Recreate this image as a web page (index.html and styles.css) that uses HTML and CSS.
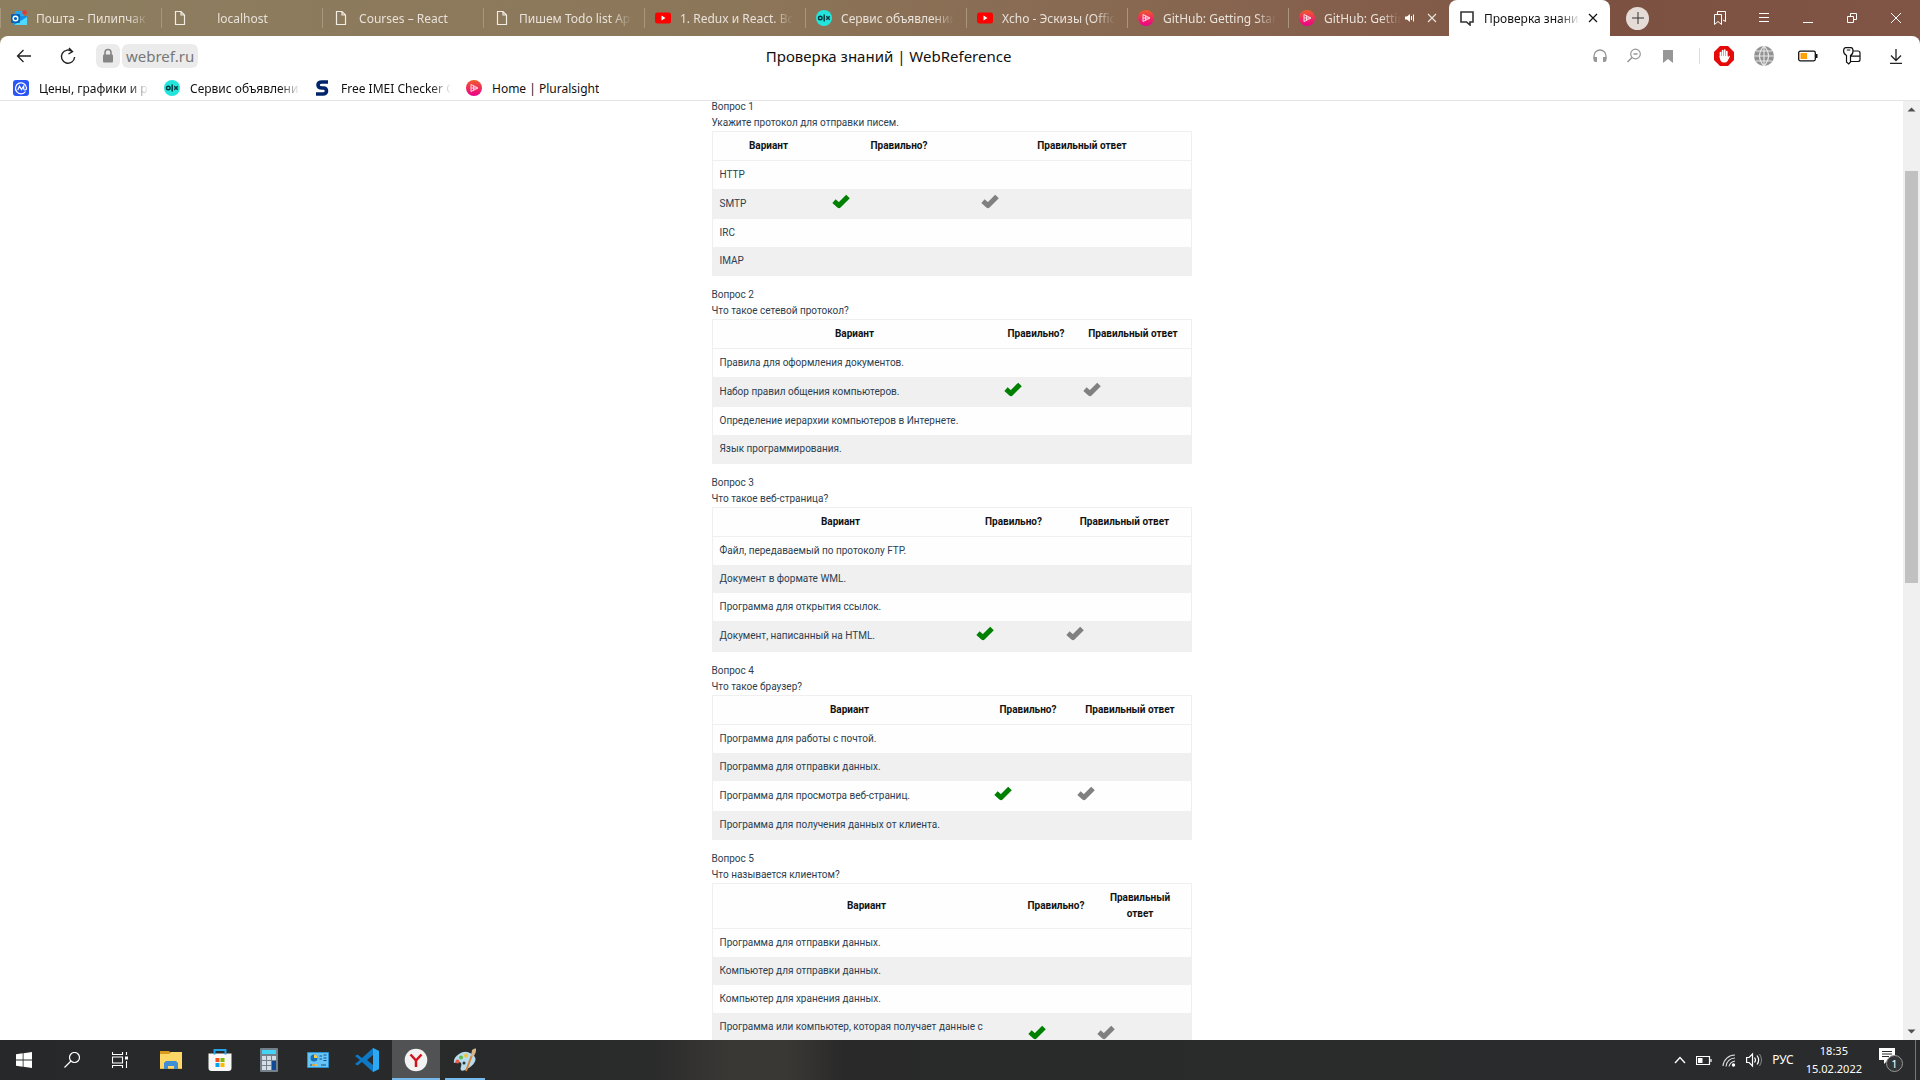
FILE: index.html
```html
<!DOCTYPE html>
<html lang="ru">
<head>
<meta charset="utf-8">
<title>Проверка знаний | WebReference</title>
<link rel="stylesheet" href="styles.css">
</head>
<body>
<svg class="defs" aria-hidden="true">
  <symbol id="check" viewBox="0 0 18 20"><path d="M2 7.200 7 11.600 16 2.400" fill="none" stroke="currentColor" stroke-width="5" stroke-linejoin="round"/></symbol>
  <symbol id="doc" viewBox="0 0 16 16"><path d="M3.500 1.500h5.500L12.500 5v9.500h-9zM9 1.500V5h3.500" fill="none" stroke="#f1ece4" stroke-width="1.2"/></symbol>
  <symbol id="youtube" viewBox="0 0 16 16"><rect y="2.500" width="16" height="11" rx="2.500" fill="#f00"/><path d="M6.500 5.500v5L10.500 8z" fill="#fff"/></symbol>
  <symbol id="olx" viewBox="0 0 16 16"><circle cx="8" cy="8" r="8" fill="#23e5db"/><g fill="none" stroke="#04353c" stroke-width="1.400"><circle cx="4.300" cy="8" r="1.800"/><path d="M8.200 4.500v7M10.300 6.300l3.400 3.400"/><path d="M13.700 6.300l-3.400 3.400"/></g></symbol>
  <symbol id="plural" viewBox="0 0 16 16"><circle cx="8" cy="8" r="8" fill="url(#pink)"/><path d="M5 4.500v7l7-3.500zM7.500 5.500v5M5 8h6" fill="none" stroke="#ffd9e4" stroke-width="1"/></symbol>
  <symbol id="cross" viewBox="0 0 10 10"><path d="m1 1 8 8M9 1 1 9" fill="none" stroke="currentColor" stroke-width="1.200"/></symbol>
  <linearGradient id="pink" x1="0" y1="0" x2="0" y2="1"><stop offset="0" stop-color="#f15b2a"/><stop offset="1" stop-color="#ec008c"/></linearGradient>
</svg>

<header class="browser">
  <div class="tabstrip">
    <nav class="tabs" aria-label="Вкладки">
      <a class="tab" href="#"><svg class="i16" viewBox="0 0 16 16"><path d="M4 1h9v7H4z" fill="#28a8ea"/><path d="M3 6h13v9H3z" fill="#1490df"/><path d="m3 15 13-8v8z" fill="#50d9ff"/><rect y="4" width="9" height="9" rx="1" fill="#0364b8"/><circle cx="4.500" cy="8.500" r="2.300" fill="none" stroke="#fff" stroke-width="1.400"/><circle cx="13.500" cy="2.500" r="2.300" fill="#e53935"/></svg><span class="tab-label">Пошта – Пилипчак</span></a>
      <a class="tab" href="#"><svg class="i16"><use href="#doc"/></svg><span class="tab-label centred">localhost</span></a>
      <a class="tab" href="#"><svg class="i16"><use href="#doc"/></svg><span class="tab-label centred">Courses – React</span></a>
      <a class="tab" href="#"><svg class="i16"><use href="#doc"/></svg><span class="tab-label">Пишем Todo list App</span></a>
      <a class="tab" href="#"><svg class="i16"><use href="#youtube"/></svg><span class="tab-label">1. Redux и React. Все</span></a>
      <a class="tab" href="#"><svg class="i16"><use href="#olx"/></svg><span class="tab-label">Сервис объявлений</span></a>
      <a class="tab" href="#"><svg class="i16"><use href="#youtube"/></svg><span class="tab-label">Xcho - Эскизы (Offic</span></a>
      <a class="tab" href="#"><svg class="i16"><use href="#plural"/></svg><span class="tab-label">GitHub: Getting Start</span></a>
      <div class="tab with-close"><svg class="i16"><use href="#plural"/></svg><span class="tab-label">GitHub: Getting</span><svg class="i10" viewBox="0 0 10 10"><path d="M0 3.500h2L5 1v8L2 6.500H0z" fill="#fff"/><path d="M6.500 3v4M8.500 1.500v7" stroke="#fff"/></svg><button class="close" aria-label="Закрыть"><svg class="i10"><use href="#cross"/></svg></button></div>
      <div class="tab with-close active"><svg class="i16" viewBox="0 0 16 16"><path d="M2 2h12v10h-3v3l-3.500-3H2z" fill="none" stroke="#333" stroke-width="1.600"/></svg><span class="tab-label">Проверка знаний</span><button class="close" aria-label="Закрыть"><svg class="i10"><use href="#cross"/></svg></button></div>
    </nav>
    <button class="plus" aria-label="Новая вкладка"><svg class="i12" viewBox="0 0 12 12"><path d="M6 0v12M0 6h12" stroke="#333"/></svg></button>
    <div class="window-buttons">
      <button aria-label="Коллекции"><svg class="i16" viewBox="0 0 16 16"><path d="M2.500 4.500h7v10L6 11.500l-3.500 3zM5.500 4.500v-3h8v10L11 10" fill="none" stroke="#fff"/></svg></button>
      <button aria-label="Меню"><svg class="i16" viewBox="0 0 16 16"><path d="M3 3.500h10M3 7.500h10M3 11.500h10" stroke="#fff"/></svg></button>
      <button aria-label="Свернуть"><svg class="i16" viewBox="0 0 16 16"><path d="M3 12.500h10" stroke="#fff"/></svg></button>
      <button aria-label="Восстановить"><svg class="i16" viewBox="0 0 16 16"><path d="M3.500 6.500h6v6h-6zM6.500 6v-2.500h6v6H10" fill="none" stroke="#fff"/></svg></button>
      <button aria-label="Закрыть окно"><svg class="i16" viewBox="0 0 16 16"><path d="m3 3 10 10M13 3 3 13" stroke="#fff"/></svg></button>
    </div>
  </div>

  <div class="toolbar">
    <button class="nav" aria-label="Назад"><svg class="i16" viewBox="0 0 16 16"><path d="M15 8H2M7.500 2 1.500 8l6 6" fill="none" stroke="#222" stroke-width="1.300"/></svg></button>
    <button class="nav" aria-label="Обновить"><svg class="i18" viewBox="0 0 18 18"><path d="M13.500 4.800A6.600 6.600 0 1 0 15.600 10M10 1l3.500 3.600L9.500 7" fill="none" stroke="#222" stroke-width="1.400"/></svg></button>
    <button class="chip lock" aria-label="Защита"><svg class="i16" viewBox="0 0 16 16"><path d="M5 8V4.500a3 3 0 0 1 6 0V8" fill="none" stroke="#858585" stroke-width="1.600"/><rect x="3" y="6.500" width="10" height="8" rx="1" fill="#858585"/></svg></button>
    <button class="chip">webref.ru</button>
    <h1 class="page-title">Проверка знаний | WebReference</h1>
    <div class="tools small">
      <button aria-label="Аудио"><svg class="i16" viewBox="0 0 16 16"><path d="M2 11V8a6 6 0 0 1 12 0v3" fill="none" stroke="#979797" stroke-width="1.300"/><path d="M1.500 9H5v5H3.500a2 2 0 0 1-2-2zM14.500 9H11v5h1.500a2 2 0 0 0 2-2z" fill="#979797"/></svg></button>
      <button aria-label="Масштаб"><svg class="i16" viewBox="0 0 16 16"><circle cx="9.500" cy="6" r="4.800" fill="none" stroke="#979797" stroke-width="1.200"/><path d="M7.500 6h4M6 9.400 1.500 14" stroke="#979797" stroke-width="1.500"/></svg></button>
      <button aria-label="Закладка"><svg class="i16" viewBox="0 0 16 16"><path d="M3 2h10v13l-5-4-5 4z" fill="#979797"/></svg></button>
    </div>
    <div class="tools">
      <button class="blocker" aria-label="Блокировщик"><svg class="i20" viewBox="0 0 20 20"><path d="M6 0h8l6 6v8l-6 6H6l-6-6V6z" fill="#e50b0b"/><path d="M6.500 11V6.500M8.600 10V4.500M10.700 10V4.200M12.800 11V5.500" stroke="#fff" stroke-width="1.700" stroke-linecap="round"/><path d="M5.700 10h8l.3 1.200 1-1.400q1.200 0 .8 1L13.600 15q-1 1.500-3.200 1.500-4.700 0-4.700-5.500z" fill="#fff"/></svg></button>
      <button aria-label="Перевод"><svg class="i20" viewBox="0 0 20 20"><circle cx="10" cy="10" r="10" fill="#929292"/><path d="M10 0v20M0 10h20M2 5h16M2 15h16M10 0Q1 10 10 20Q19 10 10 0" fill="none" stroke="#e8e8e8" stroke-width="1.100"/></svg></button>
      <button aria-label="Батарея"><svg class="i20" viewBox="0 0 20 20"><rect x=".7" y="5.200" width="16.600" height="9.600" rx="1.500" fill="none" stroke="#111" stroke-width="1.300"/><path d="M18.500 8v4" stroke="#111" stroke-width="2"/><path d="M2.500 7H9v6H2.500z" fill="#ffa200"/></svg></button>
      <button aria-label="Пароли"><svg class="i18" viewBox="0 0 18 18"><path d="M3.500 8.500Q.6 7 .6 4T2.500.600h5.500q2 0 2 3.400T7.500 8.500v6.500l-1.800 2-2.200-2zM3.800 3h3.500M10.500 4h4.500q2 0 2 2v6.500q0 2-2 2H8M8 9.200h9" fill="none" stroke="#111" stroke-width="1.200"/></svg></button>
      <button aria-label="Загрузки"><svg class="i16" viewBox="0 0 16 16"><path d="M8 1v11M3 7.500 8 12.500l5-5M2 15.300h12" fill="none" stroke="#222" stroke-width="1.300"/></svg></button>
    </div>
  </div>

  <nav class="bookmarks" aria-label="Закладки">
    <a href="#"><svg class="i16" viewBox="0 0 16 16"><rect width="16" height="16" rx="3" fill="#2b55f5"/><g fill="none" stroke="#fff" stroke-width="1.200"><path d="M12.500 11.500A5.500 5.500 0 1 1 13.500 8q0 2-1.500 2t-1.300-2V6L8.500 9.500 6.500 6 4.800 10"/></g></svg><span>Цены, графики и рын</span></a>
    <a href="#"><svg class="i16"><use href="#olx"/></svg><span>Сервис объявлений</span></a>
    <a href="#"><svg class="i16" viewBox="0 0 16 16"><path d="M13 2H7Q3 2 3 5t4 3h1.500q3 0 3 3t-3.500 3H1" fill="none" stroke="#00246b" stroke-width="3.600"/></svg><span>Free IMEI Checker Ch</span></a>
    <a class="whole" href="#"><svg class="i16"><use href="#plural"/></svg><span>Home | Pluralsight</span></a>
  </nav>
</header>

<div class="viewport">
  <main class="page">
    <div class="quiz">
      <section class="question q1">
        <p>Вопрос 1</p><p>Укажите протокол для отправки писем.</p>
        <table>
          <colgroup><col class="c1"><col class="c2"><col class="c3"></colgroup>
          <thead><tr><th>Вариант</th><th>Правильно?</th><th>Правильный ответ</th></tr></thead>
          <tbody>
            <tr><td>HTTP</td><td></td><td></td></tr>
            <tr><td>SMTP</td><td class="mark right"><svg><use href="#check"/></svg></td><td class="mark"><svg><use href="#check"/></svg></td></tr>
            <tr><td>IRC</td><td></td><td></td></tr>
            <tr><td>IMAP</td><td></td><td></td></tr>
          </tbody>
        </table>
      </section>
      <section class="question q2">
        <p>Вопрос 2</p><p>Что такое сетевой протокол?</p>
        <table>
          <colgroup><col class="c1"><col class="c2"><col class="c3"></colgroup>
          <thead><tr><th>Вариант</th><th>Правильно?</th><th>Правильный ответ</th></tr></thead>
          <tbody>
            <tr><td>Правила для оформления документов.</td><td></td><td></td></tr>
            <tr><td>Набор правил общения компьютеров.</td><td class="mark right"><svg><use href="#check"/></svg></td><td class="mark"><svg><use href="#check"/></svg></td></tr>
            <tr><td>Определение иерархии компьютеров в Интернете.</td><td></td><td></td></tr>
            <tr><td>Язык программирования.</td><td></td><td></td></tr>
          </tbody>
        </table>
      </section>
      <section class="question q3">
        <p>Вопрос 3</p><p>Что такое веб-страница?</p>
        <table>
          <colgroup><col class="c1"><col class="c2"><col class="c3"></colgroup>
          <thead><tr><th>Вариант</th><th>Правильно?</th><th>Правильный ответ</th></tr></thead>
          <tbody>
            <tr><td>Файл, передаваемый по протоколу FTP.</td><td></td><td></td></tr>
            <tr><td>Документ в формате WML.</td><td></td><td></td></tr>
            <tr><td>Программа для открытия ссылок.</td><td></td><td></td></tr>
            <tr><td>Документ, написанный на HTML.</td><td class="mark right"><svg><use href="#check"/></svg></td><td class="mark"><svg><use href="#check"/></svg></td></tr>
          </tbody>
        </table>
      </section>
      <section class="question q4">
        <p>Вопрос 4</p><p>Что такое браузер?</p>
        <table>
          <colgroup><col class="c1"><col class="c2"><col class="c3"></colgroup>
          <thead><tr><th>Вариант</th><th>Правильно?</th><th>Правильный ответ</th></tr></thead>
          <tbody>
            <tr><td>Программа для работы с почтой.</td><td></td><td></td></tr>
            <tr><td>Программа для отправки данных.</td><td></td><td></td></tr>
            <tr><td>Программа для просмотра веб-страниц.</td><td class="mark right"><svg><use href="#check"/></svg></td><td class="mark"><svg><use href="#check"/></svg></td></tr>
            <tr><td>Программа для получения данных от клиента.</td><td></td><td></td></tr>
          </tbody>
        </table>
      </section>
      <section class="question q5">
        <p>Вопрос 5</p><p>Что называется клиентом?</p>
        <table>
          <colgroup><col class="c1"><col class="c2"><col class="c3"></colgroup>
          <thead><tr><th>Вариант</th><th>Правильно?</th><th>Правильный<br>ответ</th></tr></thead>
          <tbody>
            <tr><td>Программа для отправки данных.</td><td></td><td></td></tr>
            <tr><td>Компьютер для отправки данных.</td><td></td><td></td></tr>
            <tr><td>Компьютер для хранения данных.</td><td></td><td></td></tr>
            <tr class="tall"><td>Программа или компьютер, которая получает данные с</td><td class="mark right"><svg><use href="#check"/></svg></td><td class="mark"><svg><use href="#check"/></svg></td></tr>
          </tbody>
        </table>
      </section>
    </div>
  </main>
  <div class="scrollbar" aria-hidden="true">
    <svg viewBox="0 0 17 17"><path d="M4.500 10.500h8l-4-4z" fill="#505050"/></svg>
    <div class="track"><div class="thumb"></div></div>
    <svg viewBox="0 0 17 17"><path d="M4.500 6.500h8l-4 4z" fill="#505050"/></svg>
  </div>
</div>

<footer class="taskbar">
  <div class="apps system">
    <button aria-label="Пуск"><svg class="i16" viewBox="0 0 16 16"><path d="M0 2.300 6.700 1.300V7.600H0zM7.500 1.200 16 0v7.600H7.500zM0 8.400h6.700v6.300L0 13.700zM7.500 8.400H16V16l-8.500-1.200z" fill="#fff"/></svg></button>
    <button aria-label="Поиск"><svg class="i16" viewBox="0 0 16 16"><circle cx="10.500" cy="5.500" r="5" fill="none" stroke="#fff" stroke-width="1.200"/><path d="M7 9 .5 15.500" stroke="#fff" stroke-width="1.300"/></svg></button>
    <button aria-label="Задачи"><svg class="i16" viewBox="0 0 16 16"><path d="M.5 0v2.500h10V0M.5 16v-2.500h10V16M.500 5h10v6H.500zM14.500 0v3M14.500 9v7" fill="none" stroke="#fff" stroke-width="1.100"/><path d="M13 4.500h3v3h-3z" fill="#fff"/></svg></button>
  </div>
  <div class="apps">
    <button aria-label="Проводник"><svg class="i24" viewBox="0 0 24 24"><path d="M1 3h9l2 2h11v16H1z" fill="#d99a1c"/><path d="M1 6h9l2-2h11v16.500H1z" fill="#ffd766"/><path d="M5 21v-6l2-2h10l2 2v6h-4v-3H9v3z" fill="#3f8fd6"/></svg></button>
    <button aria-label="Магазин"><svg class="i24" viewBox="0 0 24 24"><path d="M.5 5.500h23V20q0 3-3 3h-17q-3 0-3-3z" fill="#f7f7f7"/><path d="M6.500 6.500V2h11v4.500" fill="none" stroke="#22a0ea" stroke-width="2"/><path d="M7.500 10h4v4h-4z" fill="#f25022"/><path d="M12.500 10h4v4h-4z" fill="#7fba00"/><path d="M7.500 15h4v4h-4z" fill="#00a4ef"/><path d="M12.500 15h4v4h-4z" fill="#ffb900"/></svg></button>
    <button aria-label="Калькулятор"><svg class="i24" viewBox="0 0 24 24"><rect x="3" width="18" height="24" rx="1" fill="#74808c"/><path d="M5 2h14v4H5z" fill="#43d3f5"/><path d="M5 8h4v4H5zM10 8h4v4h-4zM15 8h4v4h-4zM5 13h4v4H5zM10 13h4v4h-4zM5 18h4v4H5zM10 18h4v4h-4z" fill="#d5dde4"/><path d="M15 13h4v9h-4z" fill="#104a94"/></svg></button>
    <button aria-label="Панель"><svg class="i24" viewBox="0 0 24 24"><path d="M1.500 4.500h21v15h-21z" fill="#66c5f7" stroke="#2b8fd0"/><circle cx="8" cy="10" r="3.500" fill="#176fb4"/><path d="M8 10V6.500a3.500 3.500 0 0 1 3.500 3.500z" fill="#ffc84a"/><path d="M13.500 8h2.500M13.500 11h2.500M17.500 7h3M17.500 10h3M17.500 12.500h3M4 17h5M15 17h5" stroke="#124f88"/><path d="M6 17h6" stroke="#ffb432" stroke-width="1.500"/></svg></button>
    <button aria-label="Код"><svg class="i24" viewBox="0 0 24 24"><path d="M18 0 24 3v18l-6 3L7 14l-4.500 3.500L0 16l5-4-5-4 2.500-1.500L7 10zM18 7l-6 5 6 5z" fill="#0f78c4"/><path d="m18 0 6 3v18l-6 3z" fill="#2ba9f5"/></svg></button>
    <button class="current" aria-label="Браузер"><svg class="i24" viewBox="0 0 24 24"><circle cx="12" cy="12" r="11.300" fill="#f2f2f2"/><path d="m6.500 6.500 5.500 6 5.500-6M12 12v7" fill="none" stroke="#d3131b" stroke-width="2.500"/></svg></button>
    <button class="open" aria-label="Рисунок"><svg class="i24" viewBox="0 0 24 24"><path d="M1 15Q0 10 6 6t12-.5 4 8-9 8-5-3T1 15z" fill="#b6dced"/><circle cx="4.500" cy="13.500" r="2" fill="#e95c4b"/><circle cx="8" cy="9.500" r="2" fill="#5fbb46"/><circle cx="13" cy="7.500" r="2" fill="#f3c437"/><circle cx="11" cy="15" r="1.500" fill="#27343c"/><path d="m13 23 6-16" stroke="#d98436" stroke-width="2"/><path d="m18 8 1-6q2-2 4-1.500Q23.500 5 20 9z" fill="#d8b48a"/></svg></button>
  </div>
  <div class="tray">
    <svg class="i12" viewBox="0 0 12 12"><path d="m1 9 5-5.500L11 9" fill="none" stroke="#fff" stroke-width="1.300"/></svg>
    <svg class="i16" viewBox="0 0 16 16"><path d="M.500 4.500h13v8H.500zM15 7v3" fill="none" stroke="#fff" stroke-width="1.200"/><path d="M2 6h4.500v5H2z" fill="#fff"/></svg>
    <svg class="i14" viewBox="0 0 14 14"><g fill="none" stroke="#ddd" stroke-width="1.100"><path d="M1 13A12 12 0 0 1 13 2M4 13.500A9 9 0 0 1 13 5M7 13.500Q8 9 13 8"/></g><circle cx="11.500" cy="12" r="1.700" fill="#fff"/></svg>
    <svg class="i16" viewBox="0 0 16 16"><path d="M.6 5.500h2.500L6.500 2v12L3.100 10.500H.600zM8.500 5.500q2 2.500 0 5M11 3.500q3.300 4.500 0 9" fill="none" stroke="#fff" stroke-width="1.200"/><path d="M13.500 2q4 6 0 12" fill="none" stroke="#888"/></svg>
    <span class="lang">РУС</span>
    <time class="clock" datetime="2022-02-15T18:35">18:35<br>15.02.2022</time>
    <button class="notices" aria-label="Уведомления"><svg class="i24" viewBox="0 0 24 24"><path d="M0 0h16v12H9l-4 4v-4H0z" fill="#fff"/><path d="M3 3.500h10M3 6h10M3 8.500h7" stroke="#292a2b"/></svg><span class="badge">1</span></button>
  </div>
</footer>
</body>
</html>
```
FILE: styles.css
```css
* { box-sizing: border-box; }

body {
  margin: 0;
  height: 100vh;
  display: flex;
  flex-direction: column;
  overflow: hidden;
  background: #fff;
  font: 12px/16px "Noto Sans", sans-serif;
  color: #111;
}

button {
  display: flex;
  align-items: center;
  justify-content: center;
  margin: 0;
  padding: 0;
  border: 0;
  background: none;
  color: inherit;
  font: inherit;
}

a { color: inherit; text-decoration: none; }
svg { display: block; flex: none; }
.defs { position: absolute; width: 0; height: 0; }
.i10 { width: 10px; height: 10px; }
.i12 { width: 12px; height: 12px; }
.i14 { width: 14px; height: 14px; }
.i16 { width: 16px; height: 16px; }
.i18 { width: 18px; height: 18px; }
.i20 { width: 20px; height: 20px; }
.i24 { width: 24px; height: 24px; }

/* Browser frame */
.browser {
  flex: none;
  border-bottom: 1px solid #e4e4e4;
  background: linear-gradient(90deg, #8d7e60, #8c7659 38%, #86634e 66%, #7d5142 84%, #805546) top / 100% 48px no-repeat;
}

.tabstrip { display: flex; align-items: center; height: 36px; }

.tabs {
  display: grid;
  grid-template-columns: repeat(10, minmax(0, 1fr));
  flex: 0 1 1610px;
  min-width: 0;
  height: 36px;
  align-items: center;
}

.tab {
  display: flex;
  align-items: center;
  gap: 9px;
  height: 20px;
  padding: 0 12px 0 10px;
  border-left: 1px solid #a8977c;
  color: #e9e2da;
}

.tab-label {
  flex: 1;
  min-width: 0;
  overflow: hidden;
  padding-top: 2px;
  line-height: 18px;
  white-space: nowrap;
  -webkit-mask-image: linear-gradient(90deg, #000 calc(100% - 20px), transparent);
  mask-image: linear-gradient(90deg, #000 calc(100% - 20px), transparent);
}

.tab-label.centred {
  padding-right: 22px;
  text-align: center;
}

.tab.with-close { padding-right: 4px; gap: 4px; }
.with-close .tab-label { margin-left: 5px; }
.tab .close { width: 26px; height: 16px; }

.tab.active {
  height: 36px;
  gap: 0;
  border: 0;
  border-radius: 8px 8px 0 0;
  background: #fff;
  color: #111;
}

.active .tab-label { margin-left: 9px; }

.plus {
  width: 23px;
  height: 23px;
  margin-left: 16px;
  border-radius: 50%;
  background: #e5dcd8;
}

.window-buttons { display: flex; margin-left: auto; padding-right: 2px; }
.window-buttons button { width: 44px; height: 36px; }

.toolbar {
  display: flex;
  align-items: center;
  height: 40px;
  padding: 0 2px;
  border-radius: 8px 8px 0 0;
  background: #fff;
}

.nav { width: 44px; height: 40px; }

.chip {
  height: 24px;
  margin-left: 2px;
  padding: 0 4px;
  border-radius: 6px;
  background: #ebebeb;
  color: #777;
  font-size: 15px;
}

.chip.lock { width: 24px; margin-left: 6px; padding: 0; }

.page-title {
  flex: 1;
  margin: 0;
  padding-right: 4px;
  font-size: 15px;
  font-weight: 400;
  line-height: 20px;
  text-align: center;
}

.tools { display: flex; align-items: center; }
.tools button { width: 44px; height: 40px; }
.tools.small button { width: 34px; }
.tools button.blocker { width: 36px; }

.tools.small::after {
  content: "";
  width: 1px;
  height: 16px;
  margin: 0 6px 0 14px;
  background: #ddd;
}

.bookmarks {
  display: flex;
  gap: 15px;
  height: 24px;
  padding: 0 13px;
  background: #fff;
}

.bookmarks a {
  display: flex;
  align-items: center;
  gap: 10px;
  width: 136px;
}

.bookmarks .whole { width: auto; }

.bookmarks span {
  overflow: hidden;
  padding-top: 2px;
  line-height: 18px;
  white-space: nowrap;
  -webkit-mask-image: linear-gradient(90deg, #000 calc(100% - 20px), transparent);
  mask-image: linear-gradient(90deg, #000 calc(100% - 20px), transparent);
}

.bookmarks .whole span { -webkit-mask-image: none; mask-image: none; }

/* Page */
.viewport { display: flex; flex: 1; min-height: 0; }
.page { flex: 1; overflow: hidden; background: #fff; }

.quiz {
  max-width: 480px;
  margin: -2px auto 0;
  color: #2c3e50;
  font: 10px/16px Roboto, sans-serif;
}

.question { margin-bottom: 11px; }
.question p { margin: 0; }

table {
  width: 100%;
  table-layout: fixed;
  border: 1px solid #efefef;
  border-spacing: 0;
  background: #fefefe;
}

th {
  padding: 6px 7px;
  border-bottom: 1px solid #efefef;
  color: #111;
  font-weight: 700;
}

td { height: 28px; padding: 6px 7px; }
tbody tr:nth-child(even) { background: #f0f0f0; }
td.mark { padding: 5px 7px; color: #808080; }
td.mark.right { color: #008000; }
.mark svg { width: 18px; height: 20px; }
.tall td { height: 44px; }
.tall td:first-child { vertical-align: top; }

.q1 .c1 { width: 112px; }
.q1 .c2 { width: 149px; }
.q2 .c1 { width: 284px; }
.q2 .c2 { width: 79px; }
.q3 .c1 { width: 256px; }
.q3 .c2 { width: 90px; }
.q4 .c1 { width: 274px; }
.q4 .c2 { width: 83px; }
.q5 .c1 { width: 308px; }
.q5 .c2 { width: 69px; }

.scrollbar {
  display: flex;
  flex-direction: column;
  width: 17px;
  background: #f0f0f0;
}

.track {
  display: grid;
  flex: 1;
  grid-template-rows: 53fr 412fr 440fr;
  padding: 0 2px;
}

.thumb { grid-row: 2; background: #c1c1c1; }

/* Taskbar */
.taskbar {
  display: flex;
  flex: none;
  height: 40px;
  background: linear-gradient(90deg, #262829, #2a2b2b 34%, #3a3835 38%, #3a3835 41%, #292929 44%, #2a2c2c 70%, #292b2c);
  color: #fff;
}

.apps { display: flex; gap: 1px; }
.apps.system { gap: 0; margin-right: 3px; }
.apps button { width: 48px; height: 40px; }
.apps .current { background: #505253; box-shadow: inset 0 -2px #76b9ed; }
.apps .open { background: linear-gradient(#76b9ed, #76b9ed) bottom / 40px 2px no-repeat; }

.tray {
  display: flex;
  align-items: center;
  gap: 10px;
  margin-left: auto;
  margin-right: 4px;
  padding-right: 12px;
  border-right: 1px solid #777;
}

.clock { margin: 0 7px 0 2px; font-size: 11px; line-height: 18px; text-align: center; }
.notices { position: relative; }

.badge {
  position: absolute;
  right: 0;
  bottom: 0;
  width: 17px;
  height: 17px;
  border: 1px solid #999;
  border-radius: 50%;
  background: #333536;
  font-size: 11px;
  line-height: 15px;
}
```
